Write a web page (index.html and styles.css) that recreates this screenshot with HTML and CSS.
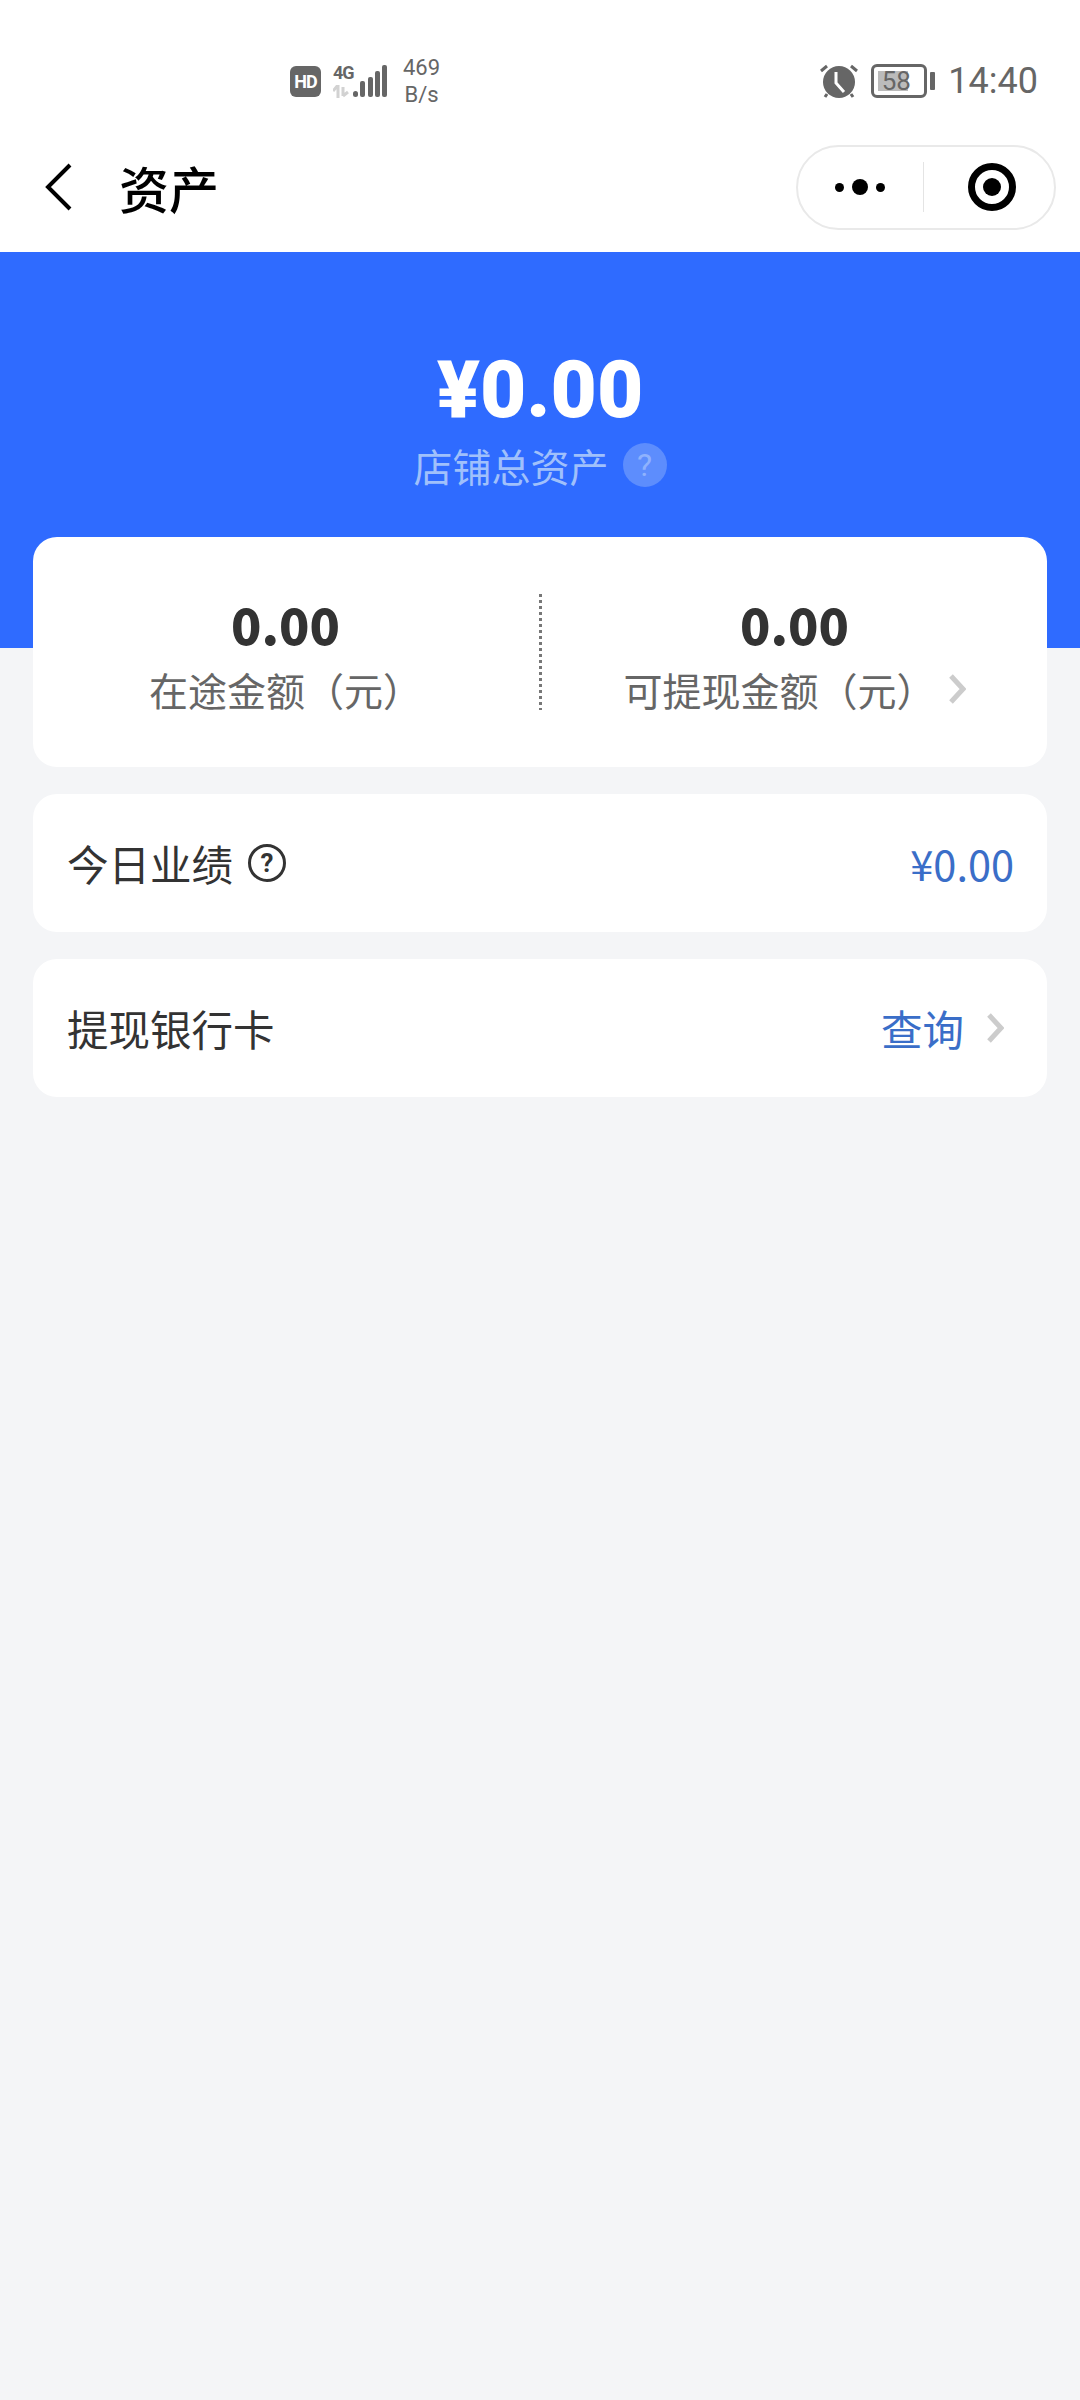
FILE: index.html
```html
<!DOCTYPE html>
<html>
<head>
    <title>资产</title>
    <link rel="stylesheet" href="styles.css">
</head>
<body>
    <div class="status-bar">
        <div class="status-group">
            <span class="hd-badge">HD</span>
            <div class="network">
                <div class="network-type">
                    <span class="network-label">4G</span>
                    <svg class="network-arrows" width="16" height="13" viewBox="0 0 16 13">
                        <path d="M5 0v13M5 0L0 6M10 2v9M10 11l5-4" fill="none" stroke="#d2d2d2" stroke-width="3"/>
                    </svg>
                </div>
                <svg class="signal" width="34" height="34" viewBox="0 0 34 34">
                    <rect x="0" y="27" width="5" height="6" rx="2.5" fill="#666"/>
                    <rect x="7" y="17" width="5" height="16" rx="2" fill="#666"/>
                    <rect x="15" y="13" width="5" height="20" rx="2" fill="#666"/>
                    <rect x="22" y="7" width="5" height="26" rx="2" fill="#666"/>
                    <rect x="29" y="1" width="5" height="32" rx="2" fill="#666"/>
                </svg>
            </div>
            <div class="speed">469<br>B/s</div>
        </div>
        <div class="status-group status-right">
            <svg class="alarm" width="38" height="36" viewBox="0 0 38 36">
                <circle cx="19" cy="19" r="16" fill="#666"/>
                <path d="M1 8l6-5M37 8l-6-5M7 31l-2 3M31 31l2 3" fill="none" stroke="#666" stroke-width="3"/>
                <path d="M16 9v11l8 9" fill="none" stroke="#fff" stroke-width="3"/>
            </svg>
            <div class="battery">
                <div class="battery-body">
                    <div class="battery-level"></div>
                    <span class="battery-num">58</span>
                </div>
                <div class="battery-tip"></div>
            </div>
            <span class="clock">14:40</span>
        </div>
    </div>

    <div class="nav-bar">
        <svg class="back" width="28" height="48" viewBox="0 0 28 48">
            <path d="M25 2L3 24l22 22" fill="none" stroke="#000" stroke-width="4"/>
        </svg>
        <div class="nav-title">资产</div>
        <div class="capsule">
            <div class="capsule-more">
                <span class="dot"></span>
                <span class="dot dot-big"></span>
                <span class="dot"></span>
            </div>
            <div class="capsule-line"></div>
            <div class="capsule-target">
                <svg width="48" height="48" viewBox="0 0 48 48">
                    <circle cx="24" cy="24" r="20.5" fill="none" stroke="#000" stroke-width="7"/>
                    <circle cx="24" cy="24" r="9" fill="#000"/>
                </svg>
            </div>
        </div>
    </div>

    <div class="hero">
        <div class="hero-amount">¥0.00</div>
        <div class="hero-label">
            <span>店铺总资产</span>
            <span class="hero-help">?</span>
        </div>
    </div>

    <div class="content">
        <div class="card summary">
            <div class="summary-col">
                <div class="summary-value">0.00</div>
                <div class="summary-label">在途金额（元）</div>
            </div>
            <div class="summary-line"></div>
            <div class="summary-col">
                <div class="summary-value">0.00</div>
                <div class="summary-label">
                    <span>可提现金额（元）</span>
                    <svg class="chevron" width="18" height="32" viewBox="0 0 18 32">
                        <path d="M3 3l12 13L3 29" fill="none" stroke="#ccc" stroke-width="5"/>
                    </svg>
                </div>
            </div>
        </div>

        <div class="card row">
            <div class="row-left">
                <span>今日业绩</span>
                <span class="row-help">?</span>
            </div>
            <div class="row-value">¥0.00</div>
        </div>

        <div class="card row row-link">
            <div class="row-left">提现银行卡</div>
            <div class="row-value">
                <span>查询</span>
                <svg class="chevron" width="18" height="32" viewBox="0 0 18 32">
                    <path d="M3 3l12 13L3 29" fill="none" stroke="#ccc" stroke-width="5"/>
                </svg>
            </div>
        </div>
    </div>
</body>
</html>
```

FILE: styles.css
```css
* {
    box-sizing: border-box;
}
body {
    margin: 0;
    width: 1080px;
    height: 2400px;
    overflow: hidden;
    background-color: #f4f5f7;
    font-family: "Noto Sans CJK SC", "Noto Sans", sans-serif;
    color: #333;
}

/* status bar */
.status-bar {
    height: 130px;
    padding: 32px 42px 0 290px;
    background-color: #fff;
    display: flex;
    justify-content: space-between;
    align-items: center;
    font-family: Roboto, sans-serif;
    color: #666;
}
.status-group {
    display: flex;
    align-items: center;
}
.hd-badge {
    width: 31px;
    height: 31px;
    border-radius: 6px;
    background-color: #666;
    color: #fff;
    font-size: 18px;
    font-weight: 700;
    line-height: 31px;
    text-align: center;
    letter-spacing: -1px;
}
.network {
    margin-left: 12px;
    display: flex;
    align-items: flex-end;
}
.network-type {
    width: 20px;
    display: flex;
    flex-direction: column;
}
.network-label {
    font-size: 18px;
    font-weight: 700;
    line-height: 18px;
    letter-spacing: -1px;
}
.network-arrows {
    display: block;
    margin-top: 3px;
}
.signal {
    display: block;
    margin-left: 0;
}
.speed {
    margin-left: 16px;
    font-size: 22px;
    line-height: 27px;
    text-align: center;
}
.battery {
    margin-left: 13px;
    display: flex;
    align-items: center;
}
.battery-body {
    width: 56px;
    height: 34px;
    border: 3px solid #666;
    border-radius: 6px;
    padding: 4px;
    display: flex;
    align-items: stretch;
    position: relative;
}
.battery-level {
    width: 70%;
    background-color: #bbb;
}
.battery-num {
    position: absolute;
    left: 0;
    right: 0;
    top: 0;
    bottom: 0;
    font-size: 26px;
    line-height: 28px;
    text-align: center;
    margin-right: 6px;
}
.battery-tip {
    width: 5px;
    height: 18px;
    margin-left: 3px;
    background-color: #666;
    border-radius: 1px;
}
.clock {
    margin-left: 13px;
    font-size: 36px;
}

/* nav bar */
.nav-bar {
    height: 122px;
    padding: 0 24px 8px 45px;
    background-color: #fff;
    display: flex;
    align-items: center;
}
.nav-title {
    margin-left: 46px;
    flex: 1;
    font-size: 50px;
    font-weight: 500;
    color: #000;
}
.capsule {
    width: 260px;
    height: 85px;
    border: 2px solid #e9e9e9;
    border-radius: 43px;
    display: flex;
    align-items: center;
}
.capsule-more {
    flex: 1;
    display: flex;
    justify-content: center;
    align-items: center;
    gap: 8px;
}
.dot {
    width: 9px;
    height: 9px;
    border-radius: 50%;
    background-color: #000;
}
.dot-big {
    width: 16px;
    height: 16px;
}
.capsule-line {
    width: 1px;
    height: 50px;
    background-color: #e4e4e4;
}
.capsule-target {
    flex: 1;
    padding-left: 6px;
    display: flex;
    justify-content: center;
}
.capsule-target svg {
    display: block;
}

/* blue header */
.hero {
    height: 396px;
    padding-top: 88px;
    background-color: #2f6bff;
    display: flex;
    flex-direction: column;
    align-items: center;
}
.hero-amount {
    font-family: Roboto, sans-serif;
    font-size: 80px;
    font-weight: 900;
    line-height: 100px;
    color: #fff;
}
.hero-label {
    display: flex;
    align-items: center;
    gap: 14px;
    font-size: 39px;
    line-height: 50px;
    color: #a0c0fb;
}
.hero-help {
    width: 44px;
    height: 44px;
    border-radius: 50%;
    background-color: #5d8dfd;
    color: #8fb2fd;
    font-family: Roboto, sans-serif;
    font-size: 32px;
    line-height: 44px;
    text-align: center;
}

/* cards */
.content {
    margin-top: -111px;
    padding: 0 33px;
    display: flex;
    flex-direction: column;
    gap: 27px;
}
.card {
    background-color: #fff;
    border-radius: 24px;
}
.summary {
    height: 230px;
    display: flex;
    align-items: center;
}
.summary-col {
    flex: 1;
    display: flex;
    flex-direction: column;
    align-items: center;
}
.summary-value {
    font-size: 50px;
    font-weight: 900;
    line-height: 66px;
}
.summary-label {
    margin-top: 8px;
    display: flex;
    align-items: center;
    gap: 12px;
    font-size: 39px;
    line-height: 50px;
    color: #666;
}
.summary-line {
    width: 3px;
    height: 116px;
    margin-left: 1px;
    background-image: repeating-linear-gradient(#777 0, #777 3px, transparent 3px, transparent 6px);
}
.chevron {
    display: block;
}
.row {
    height: 138px;
    padding: 0 33px 0 34px;
    display: flex;
    justify-content: space-between;
    align-items: center;
    font-size: 41.5px;
}
.row-link {
    padding-right: 43px;
}
.row-left {
    display: flex;
    align-items: center;
    gap: 15px;
}
.row-help {
    width: 38px;
    height: 38px;
    border: 3px solid #333;
    border-radius: 50%;
    font-family: Roboto, sans-serif;
    font-size: 26px;
    font-weight: 700;
    line-height: 32px;
    text-align: center;
}
.row-value {
    display: flex;
    align-items: center;
    gap: 22px;
    color: #3a6ec8;
}
```
